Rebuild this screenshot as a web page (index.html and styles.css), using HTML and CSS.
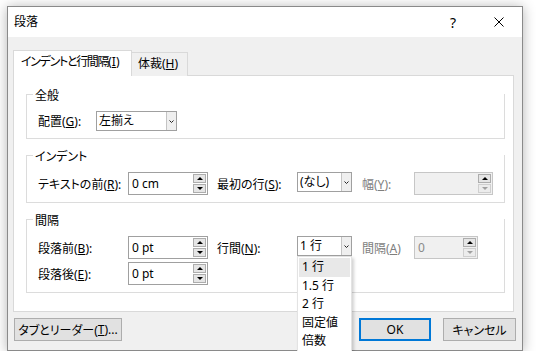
FILE: index.html
```html
<!DOCTYPE html>
<html lang="ja">
<head>
    <meta charset="UTF-8">
    <title>段落</title>
    <link rel="stylesheet" href="styles.css">
</head>
<body>

    <div class="dialog">
        <div class="titlebar">
            <span class="title">段落</span>
            <span class="tb-btn help">?</span>
            <span class="tb-btn close">
                <svg width="10" height="10" viewBox="0 0 10 10">
                    <path d="M0.5 0.5 L9.5 9.5 M9.5 0.5 L0.5 9.5" stroke="#000" stroke-width="1" fill="none"/>
                </svg>
            </span>
        </div>

        <div class="dialog-body">
            <div class="tabs">
                <div class="tab active"><span class="tight">インデントと行間隔</span>(<u>I</u>)</div>
                <div class="tab second">体裁(<u>H</u>)</div>
            </div>

            <div class="panel">
                <!-- 全般 -->
                <div class="group">
                    <div class="group-head"><span class="group-stub"></span><span class="group-label">全般</span></div>
                    <div class="group-body">
                        <div class="row row-short">
                            <span class="lbl lbl-align">配置(<u>G</u>):</span>
                            <div class="combo combo-align">
                                <span class="combo-val">左揃え</span>
                                <span class="combo-arrow"><svg width="5" height="3" viewBox="0 0 5 3"><polyline points="0.5,0.5 2.5,2.5 4.5,0.5" fill="none" stroke="#222" stroke-width="1"/></svg></span>
                            </div>
                        </div>
                    </div>
                </div>

                <!-- インデント -->
                <div class="group">
                    <div class="group-head"><span class="group-stub"></span><span class="group-label">インデント</span></div>
                    <div class="group-body">
                        <div class="row">
                            <span class="lbl lbl-first">テキストの前(<u>R</u>):</span>
                            <div class="spin">
                                <span class="spin-val">0 cm</span>
                                <span class="spin-btns"><span class="spin-btn"><i class="arrow-up"></i></span><span class="spin-btn"><i class="arrow-down"></i></span></span>
                            </div>
                            <span class="lbl lbl-second">最初の行(<u>S</u>):</span>
                            <div class="combo combo-small">
                                <span class="combo-val">(なし)</span>
                                <span class="combo-arrow"><svg width="5" height="3" viewBox="0 0 5 3"><polyline points="0.5,0.5 2.5,2.5 4.5,0.5" fill="none" stroke="#222" stroke-width="1"/></svg></span>
                            </div>
                            <span class="lbl lbl-third disabled">幅(<u>Y</u>):</span>
                            <div class="spin spin-disabled">
                                <span class="spin-val"></span>
                                <span class="spin-btns"><span class="spin-btn"><i class="arrow-up"></i></span><span class="spin-btn off"><i class="arrow-down"></i></span></span>
                            </div>
                        </div>
                    </div>
                </div>

                <!-- 間隔 -->
                <div class="group">
                    <div class="group-head"><span class="group-stub"></span><span class="group-label">間隔</span></div>
                    <div class="group-body">
                        <div class="row">
                            <span class="lbl lbl-first">段落前(<u>B</u>):</span>
                            <div class="spin">
                                <span class="spin-val">0 pt</span>
                                <span class="spin-btns"><span class="spin-btn"><i class="arrow-up"></i></span><span class="spin-btn"><i class="arrow-down"></i></span></span>
                            </div>
                            <span class="lbl lbl-second">行間(<u>N</u>):</span>
                            <div class="combo combo-small combo-open">
                                <span class="combo-val">1 行</span>
                                <span class="combo-arrow"><svg width="5" height="3" viewBox="0 0 5 3"><polyline points="0.5,0.5 2.5,2.5 4.5,0.5" fill="none" stroke="#222" stroke-width="1"/></svg></span>
                                <ul class="dropdown">
                                    <li class="item selected">1 行</li>
                                    <li class="item">1.5 行</li>
                                    <li class="item">2 行</li>
                                    <li class="item">固定値</li>
                                    <li class="item">倍数</li>
                                </ul>
                            </div>
                            <span class="lbl lbl-third disabled">間隔(<u>A</u>)</span>
                            <div class="spin spin-disabled spin-narrow">
                                <span class="spin-val">0</span>
                                <span class="spin-btns"><span class="spin-btn"><i class="arrow-up"></i></span><span class="spin-btn off"><i class="arrow-down"></i></span></span>
                            </div>
                        </div>
                        <div class="row">
                            <span class="lbl lbl-first">段落後(<u>E</u>):</span>
                            <div class="spin">
                                <span class="spin-val">0 pt</span>
                                <span class="spin-btns"><span class="spin-btn"><i class="arrow-up"></i></span><span class="spin-btn"><i class="arrow-down"></i></span></span>
                            </div>
                        </div>
                    </div>
                </div>
            </div>

            <div class="actions">
                <div class="btn btn-tabs">タブとリーダー(<u>T</u>)...</div>
                <div class="spacer"></div>
                <div class="btn btn-ok">OK</div>
                <div class="btn btn-cancel">キャンセル</div>
            </div>
        </div>
    </div>

</body>
</html>
```

FILE: styles.css
```css
/* Reset */
* {
    box-sizing: border-box;
}

body {
    margin: 0;
    background: #fff;
    font-family: "Noto Sans", "Noto Sans CJK JP", sans-serif;
    font-size: 12px;
    color: #000;
    font-feature-settings: "palt";
}

u {
    text-decoration: underline;
    text-underline-offset: 1px;
}

/* Window */
.dialog {
    width: 516px;
    height: 345px;
    margin: 6px 0 0 7px;
    border: 1px solid #8a8a8a;
    background: #f0f0f0;
    box-shadow: 0 1px 12px rgba(0, 0, 0, 0.3);
    display: flex;
    flex-direction: column;
}

.titlebar {
    height: 30px;
    flex-shrink: 0;
    background: #fff;
    display: flex;
    align-items: center;
}

.title {
    flex: 1;
    padding-left: 6px;
    line-height: 30px;
}

.tb-btn {
    width: 46px;
    height: 30px;
    display: flex;
    align-items: center;
    justify-content: center;
}

.help {
    font-size: 14px;
}

.dialog-body {
    flex: 1;
    padding: 13px 8px 0 5px;
}

/* Tabs */
.tabs {
    display: flex;
    align-items: flex-end;
    margin-bottom: -1px;
}

.tab {
    height: 24px;
    border: 1px solid #d9d9d9;
    border-bottom: none;
    background: #f0f0f0;
    line-height: 22px;
    white-space: nowrap;
}

.tab.active {
    position: relative;
    z-index: 1;
    width: 119px;
    height: 26px;
    padding-left: 7px;
    background: #fff;
}

.tight {
    letter-spacing: -1.3px;
}

.tab.second {
    width: 56px;
    border-left: none;
    padding-left: 6px;
}

.panel {
    background: #fff;
    border: 1px solid #d9d9d9;
    padding: 18px 8px 18px 12px;
}

/* Group boxes */
.group {
    border: 1px solid #dcdcdc;
    border-top: none;
}

.group + .group {
    margin-top: 16px;
}

.group-head {
    height: 1px;
    margin-left: -1px;
    display: flex;
    align-items: center;
}

.group-stub {
    width: 7px;
    height: 1px;
    flex-shrink: 0;
    background: #dcdcdc;
}

.group-label {
    padding: 3px 0 0 2px;
    line-height: 16px;
    white-space: nowrap;
}

.group-body {
    padding: 16px 11px 7px 11px;
    display: flex;
    flex-direction: column;
    gap: 3px;
}

.row {
    height: 23px;
    display: flex;
    align-items: center;
}

.row-short {
    height: 20px;
}

.lbl {
    white-space: nowrap;
    flex-shrink: 0;
}

.lbl-align { width: 58px; }
.lbl-first { width: 90px; }
.lbl-second { width: 80px; margin-left: 9px; }
.lbl-third { width: 52px; margin-left: 10px; }

.disabled {
    color: #7e7e7e;
}

/* Spin boxes */
.spin {
    width: 80px;
    height: 23px;
    padding: 1px;
    border: 1px solid #a0a0a0;
    background: #fff;
    display: flex;
    flex-shrink: 0;
}

.spin-val {
    flex: 1;
    padding-left: 2px;
    line-height: 19px;
}

.spin-btns {
    width: 13px;
    display: flex;
    flex-direction: column;
    gap: 1px;
}

.spin-btn {
    flex: 1;
    border: 1px solid #adadad;
    background: #e5e5e5;
    display: flex;
    align-items: center;
    justify-content: center;
}

.arrow-up,
.arrow-down {
    width: 0;
    height: 0;
    border-left: 3px solid transparent;
    border-right: 3px solid transparent;
}

.arrow-up { border-bottom: 3px solid #000; }
.arrow-down { border-top: 3px solid #000; }

.spin-disabled {
    width: 79px;
    border-color: #c6c6c6;
    background: #f0f0f0;
    color: #8a8a8a;
}

.spin-narrow {
    width: 64px;
}

.spin-btn.off {
    border-color: #cfcfcf;
    background: #ececec;
}

.spin-btn.off .arrow-down {
    border-top-color: #a0a0a0;
}

/* Combo boxes */
.combo {
    height: 20px;
    border: 1px solid #a0a0a0;
    background: #fff;
    display: flex;
    flex-shrink: 0;
    align-self: flex-start;
}

.row-short .combo {
    align-self: center;
}

.combo-align { width: 81px; }
.combo-small { width: 55px; }

.combo-val {
    flex: 1;
    padding-left: 2px;
    line-height: 18px;
    white-space: nowrap;
}

.combo-arrow {
    width: 10px;
    border-left: 1px solid #c4c4c4;
    background: #efefef;
    display: flex;
    align-items: center;
    justify-content: center;
}

.combo-arrow svg {
    display: block;
}

.combo-open {
    position: relative;
}

.dropdown {
    position: absolute;
    left: -1px;
    top: 19px;
    width: 55px;
    margin: 0;
    padding: 1px;
    list-style: none;
    background: #fff;
    border: 1px solid #e3e3e3;
    box-shadow: 2px 2px 3px rgba(0, 0, 0, 0.18);
    z-index: 5;
}

.item {
    height: 18.6px;
    line-height: 18.6px;
    padding-left: 3px;
    white-space: nowrap;
}

.item.selected {
    background: #e8e8e8;
}

/* Buttons */
.actions {
    height: 23px;
    margin: 6px -2px 0 1px;
    display: flex;
}

.spacer {
    flex: 1;
}

.btn {
    height: 23px;
    border: 1px solid #adadad;
    background: #e1e1e1;
    display: flex;
    align-items: center;
    justify-content: center;
    white-space: nowrap;
}

.btn-tabs { width: 108px; }

.btn-ok {
    width: 72px;
    margin-right: 12px;
    border: 2px solid #0078d7;
}

.btn-cancel { width: 73px; }
```
